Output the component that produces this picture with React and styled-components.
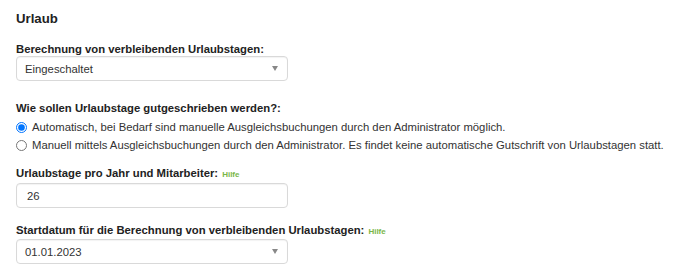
import React from "react";
import styled, { createGlobalStyle } from "styled-components";

const Global = createGlobalStyle`
  html, body { margin: 0; padding: 0; background: #fff; }
  body { font-family: "Liberation Sans", Arial, sans-serif; color: #333; font-size: 11.3px; }
`;

const Page = styled.div`
  padding: 11px 16px 0 16px;
  width: 678px;
  box-sizing: border-box;
`;

const Title = styled.h3`
  margin: 0 0 15px 0;
  font-size: 13.2px;
  line-height: 16px;
  font-weight: bold;
  color: #222;
`;

const Group = styled.div`
  margin-bottom: ${(p) => p.$mb || 0}px;
`;

const Label = styled.div`
  font-weight: bold;
  font-size: 11.3px;
  line-height: 14px;
  margin-bottom: ${(p) => p.$mb || 0}px;
  color: #222;
  white-space: nowrap;
`;

const Help = styled.span`
  font-size: 8px;
  font-weight: bold;
  color: #7ab648;
  margin-left: 4px;
`;

const Box = styled.div`
  width: 272px;
  height: 25px;
  box-sizing: border-box;
  border: 1px solid #d9d9d9;
  border-radius: 4px;
  box-shadow: inset 0 1px 1px rgba(0, 0, 0, 0.05);
  display: flex;
  align-items: center;
  justify-content: space-between;
  padding: 0 8px 0 ${(p) => p.$pl || 8}px;
  font-size: 11.3px;
  color: #333;
  background: #fff;
`;

const Arrow = styled.span`
  width: 0;
  height: 0;
  border-left: 3px solid transparent;
  border-right: 3px solid transparent;
  border-top: 5px solid #888;
  margin-right: 1px;
`;

const RadioRow = styled.label`
  display: flex;
  align-items: center;
  height: 18px;
  line-height: 18px;
  font-size: 11.3px;
  color: #333;
  white-space: nowrap;
`;

const Radio = styled.input`
  margin: 0 5px 0 0;
  width: 11px;
  height: 11px;
  flex: none;
`;

export default function App() {
  return (
    <>
      <Global />
      <Page>
        <Title>Urlaub</Title>
        <Group $mb={20}>
          <Label>Berechnung von verbleibenden Urlaubstagen:</Label>
          <Box>
            <span>Eingeschaltet</span>
            <Arrow />
          </Box>
        </Group>
        <Group $mb={12}>
          <Label $mb={3}>Wie sollen Urlaubstage gutgeschrieben werden?:</Label>
          <RadioRow>
            <Radio type="radio" name="g" defaultChecked />
            Automatisch, bei Bedarf sind manuelle Ausgleichsbuchungen durch den Administrator möglich.
          </RadioRow>
          <RadioRow>
            <Radio type="radio" name="g" />
            Manuell mittels Ausgleichsbuchungen durch den Administrator. Es findet keine automatische Gutschrift von Urlaubstagen statt.
          </RadioRow>
        </Group>
        <Group $mb={15}>
          <Label $mb={1}>
            Urlaubstage pro Jahr und Mitarbeiter:<Help>Hilfe</Help>
          </Label>
          <Box $pl={10}>
            <span>26</span>
          </Box>
        </Group>
        <Group>
          <Label>
            Startdatum für die Berechnung von verbleibenden Urlaubstagen:<Help>Hilfe</Help>
          </Label>
          <Box>
            <span>01.01.2023</span>
            <Arrow />
          </Box>
        </Group>
      </Page>
    </>
  );
}
